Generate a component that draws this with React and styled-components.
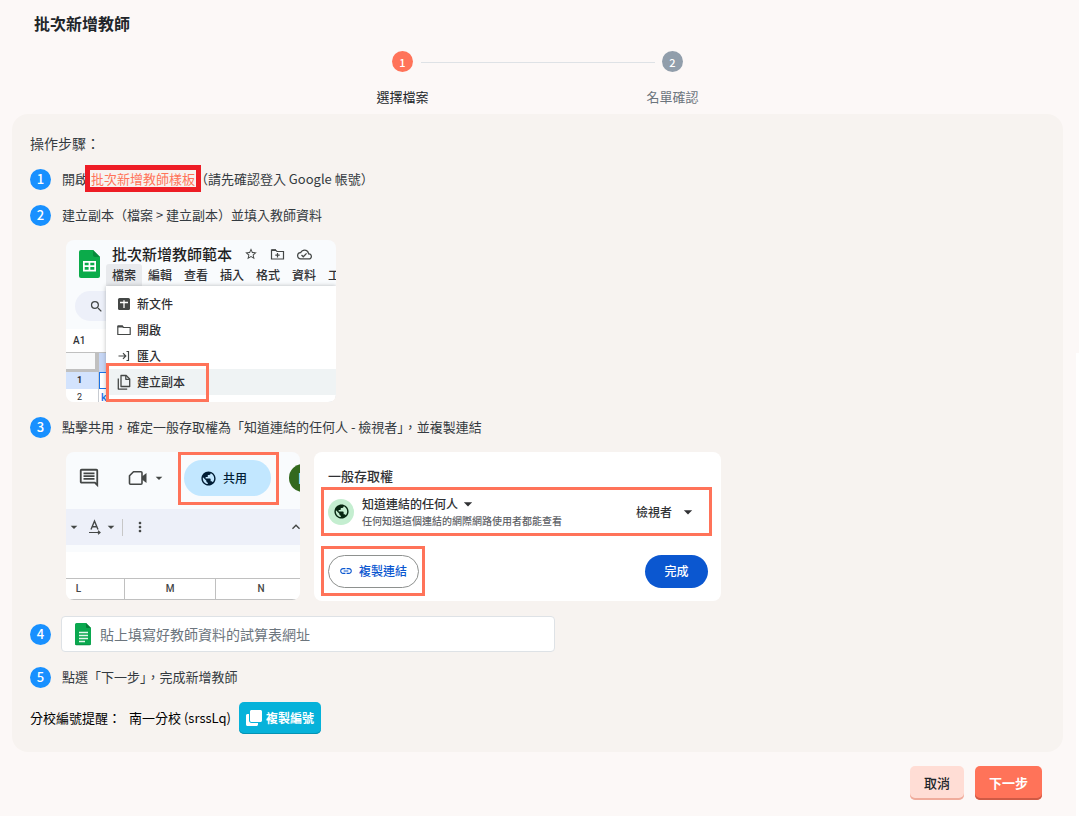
import React from "react";
import styled, { createGlobalStyle, css } from "styled-components";
import {
  MdArrowDropDown,
  MdKeyboardArrowUp,
  MdLink,
  MdMoreVert,
  MdOutlineCloudDone,
  MdOutlineComment,
  MdPublic,
  MdSearch,
  MdStarBorder,
} from "react-icons/md";
import { FaClone } from "react-icons/fa";

const color = {
  page: "#fcf8f7",
  panel: "#f7f3f0",
  text: "#343a40",
  heading: "#212529",
  coral: "#ff7359",
  blue: "#1890ff",
  cyan: "#06b2da",
  slate: "#919eab",
  sheet: "#f9fbfd",
  toolbar: "#edf0f9",
  googleBlue: "#0b57d0",
};

const GlobalStyle = createGlobalStyle`
  *, *::before, *::after { box-sizing: border-box; }
  body {
    margin: 0;
    background: ${color.page};
    color: ${color.text};
    font-family: "Noto Sans CJK TC", "Noto Sans", sans-serif;
    font-size: 13px;
    line-height: 20px;
  }
  button, input { font-family: inherit; }
  svg { display: block; flex: none; }
`;

const Shell = styled.div`
  display: flex;
  min-height: 100vh;
`;

const Page = styled.div`
  flex: 1;
  min-width: 0;
  padding: 11px 13px 16px 12px;
`;

const Gutter = styled.div`
  width: 3px;
  background: linear-gradient(transparent 353px, #ffffff 353px);
`;

const Title = styled.h1`
  margin: 0 0 16px 22px;
  color: ${color.heading};
  font-size: 16px;
  font-weight: 700;
  line-height: 24px;
`;

const Stepper = styled.ol`
  display: grid;
  grid-template-columns: 36px 234px 36px;
  justify-content: center;
  margin: 0 0 7px;
  padding: 0;
  list-style: none;
`;

const Step = styled.li`
  display: flex;
  flex-direction: column;
  align-items: center;
  gap: 15px;
  color: ${(p) => (p.$active ? color.heading : "#6c757d")};
  white-space: nowrap;
`;

const StepLine = styled.li`
  height: 1px;
  margin-top: 11px;
  background: #dee2e6;
`;

const Badge = styled.span`
  display: flex;
  flex: none;
  align-items: center;
  justify-content: center;
  width: 21px;
  height: 21px;
  border-radius: 50%;
  background: ${(p) => p.$bg};
  color: #ffffff;
  font-size: ${(p) => (p.$small ? "11px" : "13px")};
  font-weight: 500;
`;

const Panel = styled.main`
  padding: 17px 18px 18px;
  border-radius: 16px;
  background: ${color.panel};
`;

const PanelHeading = styled.h2`
  margin: 0 0 5px;
  font-size: 14px;
  font-weight: 400;
  line-height: 25px;
`;

const Instruction = styled.div`
  display: flex;
  align-items: center;
  gap: ${(p) => (p.$field ? "10px" : "11px")};
  min-height: 36px;
  margin-bottom: ${(p) => (p.$field ? "7px" : "0")};
`;

const TemplateLink = styled.a`
  position: relative;
  color: ${color.coral};
  text-decoration: none;

  &::after {
    position: absolute;
    inset: -4px -6px;
    border: 5px solid #ee1c25;
    content: "";
  }
`;

const Shots = styled.div`
  display: flex;
  flex-wrap: wrap;
  gap: 14px;
  margin: 7px 0 ${(p) => (p.$last ? "15px" : "7px")} 36px;
`;

const Shot = styled.figure`
  position: relative;
  width: ${(p) => p.$w}px;
  height: ${(p) => p.$h}px;
  margin: 0;
  overflow: hidden;
  border-radius: 8px;
  background: ${(p) => p.$bg || "#ffffff"};
  color: #303134;
  font-size: 12px;
  font-weight: 500;
  white-space: nowrap;
`;

const plainButton = css`
  display: flex;
  align-items: center;
  border: 0;
  padding: 0;
  background: none;
  color: inherit;
  font-size: 12px;
  font-weight: 500;
  line-height: 20px;
`;

const Highlight = styled.span`
  position: absolute;
  top: ${(p) => p.$y}px;
  left: ${(p) => p.$x}px;
  width: ${(p) => p.$w}px;
  height: ${(p) => p.$h}px;
  border: 3px solid ${color.coral};
  pointer-events: none;
`;

/* Spreadsheet menu illustration */

const DocHead = styled.div`
  display: flex;
  gap: 6px;
  padding-left: 13px;
`;

const DocLogo = styled.span`
  padding-top: 10px;
`;

const DocTitle = styled.div`
  display: flex;
  align-items: center;
  height: 24px;
  padding: 4px 0 0 6px;
  font-size: 15px;
  gap: 12px;
  color: #444746;

  strong {
    color: #1f1f1f;
    font-weight: 500;
  }
`;

const MenuBar = styled.div`
  display: flex;
`;

const MenuName = styled.button`
  ${plainButton}
  flex: none;
  height: 22px;
  padding: 0 6px;
  border-radius: 3px 3px 0 0;
  background: ${(p) => (p.$open ? "#e8eaed" : "none")};
`;

const SearchPill = styled.div`
  display: flex;
  align-items: center;
  height: 30px;
  margin: 5px 0 8px 9px;
  padding-left: 14px;
  border-radius: 15px;
  background: ${color.toolbar};
  color: #444746;
`;

const NameBox = styled.div`
  height: 23px;
  padding-left: 7px;
  background: #ffffff;
  font-family: Roboto, sans-serif;
  font-size: 10px;
  line-height: 23px;
`;

const Cells = styled.div`
  display: grid;
  grid-template-columns: 33px 237px;
  grid-template-rows: 20px 17px 17px;
  font-family: Roboto, sans-serif;
  font-size: 9px;
  line-height: 17px;
`;

const Corner = styled.span`
  border: solid #c0c0c0;
  border-width: 1px 4px 3px 0;
  background: #f8f9fa;
`;

const ColumnHead = styled.span`
  border-top: 1px solid #c0c0c0;
  background: #c6d6f5;
`;

const RowHead = styled.span`
  padding-right: 5px;
  border-right: 1px solid #c7cbd1;
  background: ${(p) => (p.$active ? "#d3e3fd" : "#ffffff")};
  font-weight: ${(p) => (p.$active ? 700 : 400)};
  text-align: center;
`;

const Cell = styled.span`
  padding-left: 2px;
  border: ${(p) => (p.$active ? "1px solid #1a73e8" : "0")};
  background: #ffffff;
  color: #1a73e8;
  font-size: 11px;
`;

const Dropdown = styled.div`
  position: absolute;
  inset: 46px 0 0 40px;
  padding-top: 5px;
  background: #ffffff;
  box-shadow: 0 0 4px rgba(60, 64, 67, 0.35);
`;

const MenuItem = styled.button`
  ${plainButton}
  width: 100%;
  height: 26px;
  padding-left: 11px;
  gap: 6px;
  background: ${(p) => (p.$active ? "#eff3f4" : "none")};

  svg { color: #444746; }
`;

/* Share toolbar illustration */

const ShareBar = styled.div`
  display: flex;
  align-items: center;
  height: 57px;
  padding: 0 0 5px 12px;
  color: #444746;
`;

const VideoGroup = styled.span`
  display: flex;
  align-items: center;
  gap: 3px;
  margin: 0 17px 0 28px;
`;

const Pill = styled.button`
  ${plainButton}
  flex: none;
  justify-content: center;
  gap: 6px;
  width: ${(p) => p.$w}px;
  height: ${(p) => p.$h}px;
  padding-right: ${(p) => (p.$share ? "8px" : "0")};
  border: ${(p) => (p.$outlined ? "1px solid #8e918f" : "0")};
  border-radius: 18px;
  background: ${(p) => p.$bg};
  color: ${(p) => p.$color};
`;

const Avatar = styled.span`
  flex: none;
  width: 28px;
  height: 28px;
  margin-left: 18px;
  padding-left: 9px;
  border-radius: 50%;
  background: #33691e;
  color: #ffffff;
  font-size: 14px;
  line-height: 28px;
`;

const FormatBar = styled.div`
  display: flex;
  align-items: center;
  height: 36px;
  background: ${color.toolbar};
  color: #444746;
`;

const FormatA = styled.span`
  margin: 0 0 0 5px;
`;

const Divider = styled.span`
  width: 1px;
  height: 17px;
  margin: 0 9px 0 3px;
  background: #c7c7c7;
`;

const Collapse = styled.span`
  margin: 0 -4px 0 auto;
`;

const FormulaArea = styled.div`
  height: 33px;
  border-top: 7px solid ${color.sheet};
  background: #ffffff;
`;

const Columns = styled.div`
  display: grid;
  grid-template-columns: repeat(3, 91px);
  height: 22px;
  margin-left: -33px;
  border: solid #c0c0c0;
  border-width: 1px 0;
  background: #ffffff;
  color: #444746;
  font-family: Roboto, sans-serif;
  font-size: 10px;
  line-height: 20px;
  text-align: center;

  span + span { border-left: 1px solid #c0c0c0; }
`;

/* General access illustration */

const AccessTitle = styled.div`
  height: 35px;
  padding: 14px 0 0 14px;
  font-size: 13px;
`;

const AccessRow = styled.div`
  display: flex;
  align-items: center;
  height: 49px;
  margin: 0 9px 10px 7px;
  padding: 0 11px 0 4px;
  border: 3px solid ${color.coral};
`;

const GlobeDisc = styled.span`
  display: flex;
  align-items: center;
  justify-content: center;
  width: 26px;
  height: 26px;
  margin-right: 8px;
  border-radius: 50%;
  background: #c4eed0;
  color: #072711;
`;

const AccessText = styled.div`
  flex: 1;
  color: #5f6368;
  font-size: 10px;
  line-height: 16px;
`;

const AccessSelect = styled.span`
  display: flex;
  align-items: center;
  gap: ${(p) => (p.$wide ? "6px" : "0")};
  height: 18px;
  color: #303134;
  font-size: 12px;
  line-height: 18px;
`;

const AccessActions = styled.div`
  display: flex;
  align-items: center;
  justify-content: space-between;
  margin: 0 13px 0 7px;
`;

const CopyFrame = styled.span`
  display: flex;
  align-items: center;
  justify-content: center;
  width: 104px;
  height: 50px;
  border: 3px solid ${color.coral};
`;

/* Form controls */

const UrlField = styled.label`
  display: flex;
  align-items: center;
  gap: 8px;
  width: 494px;
  height: 36px;
  padding: 0 13px;
  border: 1px solid #dee2e6;
  border-radius: 4px;
  background: #ffffff;
`;

const UrlInput = styled.input`
  flex: 1;
  min-width: 0;
  padding: 0;
  border: 0;
  outline: 0;
  background: transparent;
  color: ${color.text};
  font-size: 14px;
  line-height: 24px;

  &::placeholder { color: #6c757d; opacity: 1; }
`;

const Reminder = styled.div`
  display: flex;
  align-items: center;
  gap: 8px;
  margin-top: 7px;
  color: #000000;
`;

const Button = styled.button`
  display: flex;
  align-items: center;
  justify-content: center;
  gap: 4px;
  height: ${(p) => (p.$compact ? "32px" : "34px")};
  padding: ${(p) => (p.$compact ? "0 7px" : "0 14px")};
  border: 0;
  border-radius: 5px;
  background: ${(p) => p.$bg};
  box-shadow: inset 0 ${(p) => (p.$compact ? "-1px" : "-2px")} 0 ${(p) => p.$edge};
  color: ${(p) => p.$color || "#ffffff"};
  font-size: ${(p) => (p.$compact ? "12px" : "13px")};
  font-weight: ${(p) => p.$weight || 700};
  line-height: 20px;
`;

const Footer = styled.footer`
  display: flex;
  justify-content: flex-end;
  gap: 11px;
  padding: 14px 21px 0;
`;

function SheetsLogo() {
  return (
    <svg width="21" height="28" viewBox="0 0 21 28" aria-hidden="true">
      <path d="M2 0h12l7 7v19a2 2 0 0 1-2 2H2a2 2 0 0 1-2-2V2a2 2 0 0 1 2-2z" fill="#0bab4a" />
      <path d="M14 0l7 7h-5a2 2 0 0 1-2-2z" fill="#078a3c" />
      <path d="M4 11h13v10.500H4zM5.700 12.700v2.600h3.900v-2.600zM11.300 12.700v2.600h4v-2.600zM5.700 17v2.700h3.900V17zM11.300 17v2.700h4V17z" fill="#fff" fillRule="evenodd" />
    </svg>
  );
}

function FormLogo() {
  return (
    <svg width="17" height="23" viewBox="0 0 17 23" aria-hidden="true">
      <path d="M2 0h9l5 5v15.500a1.500 1.500 0 0 1-1.500 1.500h-13A1.500 1.500 0 0 1 0 20.500v-19A1.500 1.500 0 0 1 1.500 0z" fill="#0aa84f" />
      <path d="M11 0l5 5h-4a1 1 0 0 1-1-1z" fill="#067d38" />
      <path d="M0 20v.7A1.500 1.500 0 0 0 1.500 22.300h13a1.500 1.500 0 0 0 1.500-1.500V20a1.500 1.500 0 0 1-1.500 1.500h-13A1.500 1.500 0 0 1 0 20z" fill="#078a40" />
      <path d="M4 9.500h9M4 12.500h9M4 15.500h9M4 18.500h6" stroke="#e6f8ed" strokeWidth="1.500" />
    </svg>
  );
}

function FolderMove() {
  return (
    <svg width="15" height="14" viewBox="0 0 15 14" fill="none" stroke="currentColor" strokeWidth="1.200" aria-hidden="true">
      <path d="M1.500 3h4l1.500 1.500h6.500v7.500h-12z" />
      <path d="M1.500 3.200h4.500" strokeWidth="1.800" />
      <path d="M7.500 6v4.400M5.300 8.200h4.400" />
    </svg>
  );
}

function NewSheet() {
  return (
    <svg width="14" height="14" viewBox="0 0 14 14" aria-hidden="true">
      <rect x="1" y="1" width="12" height="12" rx="1.500" fill="currentColor" />
      <path d="M7 3.200v7.800M3 5.500h8" stroke="#fff" strokeWidth="1.300" />
    </svg>
  );
}

function OpenFolder() {
  return (
    <svg width="14" height="14" viewBox="0 0 14 14" fill="none" stroke="currentColor" aria-hidden="true">
      <path d="M.8 3h4.400l1.300 1.500h6.700v7H.8z" strokeWidth="1.200" strokeLinejoin="round" />
      <path d="M.8 3.400h5" strokeWidth="2" />
    </svg>
  );
}

function ImportIcon() {
  return (
    <svg width="14" height="14" viewBox="0 0 14 14" fill="none" stroke="currentColor" strokeWidth="1.200" aria-hidden="true">
      <path d="M1.500 7h7M6 4.200L8.800 7 6 9.800M9.500 2.500h2v9h-2" />
    </svg>
  );
}

function CopyDocument() {
  return (
    <svg width="14" height="16" viewBox="0 0 14 16" fill="none" stroke="currentColor" strokeWidth="1.300" strokeLinejoin="round" aria-hidden="true">
      <path d="M4 1.500h5.200l3.500 3.500v7.500H4z" />
      <path d="M8.800 1.500v3.800h3.900" />
      <path d="M1.300 4.500v10.600h8.900" />
    </svg>
  );
}

function VideoIcon() {
  return (
    <svg width="20" height="16" viewBox="0 0 20 16" aria-hidden="true">
      <path d="M5.500 1.800h7.500a1 1 0 0 1 1 1v10.400a1 1 0 0 1-1 1H2.500a1 1 0 0 1-1-1V5.800z" fill="none" stroke="currentColor" strokeWidth="1.600" strokeLinejoin="round" />
      <path d="M14 6.500l4.500-3.500v10L14 9.500z" fill="currentColor" />
    </svg>
  );
}

function TextRotation() {
  return (
    <svg width="16" height="16" viewBox="0 0 16 16" fill="none" stroke="currentColor" aria-hidden="true">
      <path d="M4 10.500L7.500 2 11 10.500M5.200 7.700h4.600" strokeWidth="1.400" />
      <path d="M2 13.500h11M11 11.800l2 1.700-2 1.700" strokeWidth="1.200" />
    </svg>
  );
}

const menus = ["檔案", "編輯", "查看", "插入", "格式", "資料", "工"];

const fileItems = [
  { label: "新文件", icon: <NewSheet /> },
  { label: "開啟", icon: <OpenFolder /> },
  { label: "匯入", icon: <ImportIcon /> },
  { label: "建立副本", icon: <CopyDocument />, active: true },
];

function FileMenuShot() {
  return (
    <Shot $w={270} $h={162} $bg={color.sheet}>
      <DocHead>
        <DocLogo><SheetsLogo /></DocLogo>
        <div>
          <DocTitle>
            <strong>批次新增教師範本</strong>
            <MdStarBorder size={14} />
            <FolderMove />
            <MdOutlineCloudDone size={15} />
          </DocTitle>
          <MenuBar>
            {menus.map((name, i) => (
              <MenuName key={name} type="button" $open={i === 0}>{name}</MenuName>
            ))}
          </MenuBar>
        </div>
      </DocHead>
      <SearchPill><MdSearch size={15} /></SearchPill>
      <NameBox>A1</NameBox>
      <Cells>
        <Corner />
        <ColumnHead />
        <RowHead $active>1</RowHead>
        <Cell $active />
        <RowHead>2</RowHead>
        <Cell>k</Cell>
      </Cells>
      <Dropdown>
        {fileItems.map((item) => (
          <MenuItem key={item.label} type="button" $active={item.active}>
            {item.icon}
            {item.label}
          </MenuItem>
        ))}
      </Dropdown>
      <Highlight $x={40} $y={123} $w={103} $h={39} />
    </Shot>
  );
}

function ShareShot() {
  return (
    <Shot $w={234} $h={148} $bg={color.sheet}>
      <ShareBar>
        <MdOutlineComment size={22} />
        <VideoGroup>
          <VideoIcon />
          <MdArrowDropDown size={16} />
        </VideoGroup>
        <Pill type="button" $w={87} $h={36} $bg="#c2e7ff" $color="#001d35" $share>
          <MdPublic size={17} />
          共用
        </Pill>
        <Avatar>L</Avatar>
      </ShareBar>
      <FormatBar>
        <MdArrowDropDown size={16} />
        <FormatA><TextRotation /></FormatA>
        <MdArrowDropDown size={16} />
        <Divider />
        <MdMoreVert size={16} />
        <Collapse><MdKeyboardArrowUp size={16} /></Collapse>
      </FormatBar>
      <FormulaArea />
      <Columns>
        <span>L</span>
        <span>M</span>
        <span>N</span>
      </Columns>
      <Highlight $x={112} $y={0} $w={101} $h={53} />
    </Shot>
  );
}

function AccessShot() {
  return (
    <Shot $w={407} $h={149}>
      <AccessTitle>一般存取權</AccessTitle>
      <AccessRow>
        <GlobeDisc><MdPublic size={17} /></GlobeDisc>
        <AccessText>
          <AccessSelect>
            知道連結的任何人
            <MdArrowDropDown size={20} />
          </AccessSelect>
          任何知道這個連結的網際網路使用者都能查看
        </AccessText>
        <AccessSelect $wide>
          檢視者
          <MdArrowDropDown size={20} />
        </AccessSelect>
      </AccessRow>
      <AccessActions>
        <CopyFrame>
          <Pill type="button" $w={91} $h={33} $bg="#ffffff" $color={color.googleBlue} $outlined>
            <MdLink size={14} />
            複製連結
          </Pill>
        </CopyFrame>
        <Pill type="button" $w={63} $h={33} $bg={color.googleBlue} $color="#ffffff">完成</Pill>
      </AccessActions>
    </Shot>
  );
}

export default function App() {
  return (
    <Shell>
      <GlobalStyle />
      <Page>
        <Title>批次新增教師</Title>
        <Stepper>
          <Step $active>
            <Badge $bg={color.coral} $small>1</Badge>
            選擇檔案
          </Step>
          <StepLine aria-hidden="true" />
          <Step>
            <Badge $bg={color.slate} $small>2</Badge>
            名單確認
          </Step>
        </Stepper>
        <Panel>
          <PanelHeading>操作步驟：</PanelHeading>
          <Instruction>
            <Badge $bg={color.blue}>1</Badge>
            <span>
              開啟 <TemplateLink href="#template">批次新增教師樣板</TemplateLink>（請先確認登入 Google 帳號）
            </span>
          </Instruction>
          <Instruction>
            <Badge $bg={color.blue}>2</Badge>
            <span>建立副本（檔案 &gt; 建立副本）並填入教師資料</span>
          </Instruction>
          <Shots>
            <FileMenuShot />
          </Shots>
          <Instruction>
            <Badge $bg={color.blue}>3</Badge>
            <span>點擊共用，確定一般存取權為「知道連結的任何人 - 檢視者」，並複製連結</span>
          </Instruction>
          <Shots $last>
            <ShareShot />
            <AccessShot />
          </Shots>
          <Instruction $field>
            <Badge $bg={color.blue}>4</Badge>
            <UrlField>
              <FormLogo />
              <UrlInput type="url" aria-label="試算表網址" placeholder="貼上填寫好教師資料的試算表網址" />
            </UrlField>
          </Instruction>
          <Instruction>
            <Badge $bg={color.blue}>5</Badge>
            <span>點選「下一步」，完成新增教師</span>
          </Instruction>
          <Reminder>
            <span>分校編號提醒：</span>
            <span>南一分校 (srssLq)</span>
            <Button type="button" $compact $bg={color.cyan} $edge="#0592b3">
              <FaClone size={16} />
              複製編號
            </Button>
          </Reminder>
        </Panel>
        <Footer>
          <Button type="button" $bg="#ffddd5" $edge="#f0ac9c" $color={color.heading} $weight={500}>取消</Button>
          <Button type="button" $bg={color.coral} $edge="#cf5a45">下一步</Button>
        </Footer>
      </Page>
      <Gutter aria-hidden="true" />
    </Shell>
  );
}
